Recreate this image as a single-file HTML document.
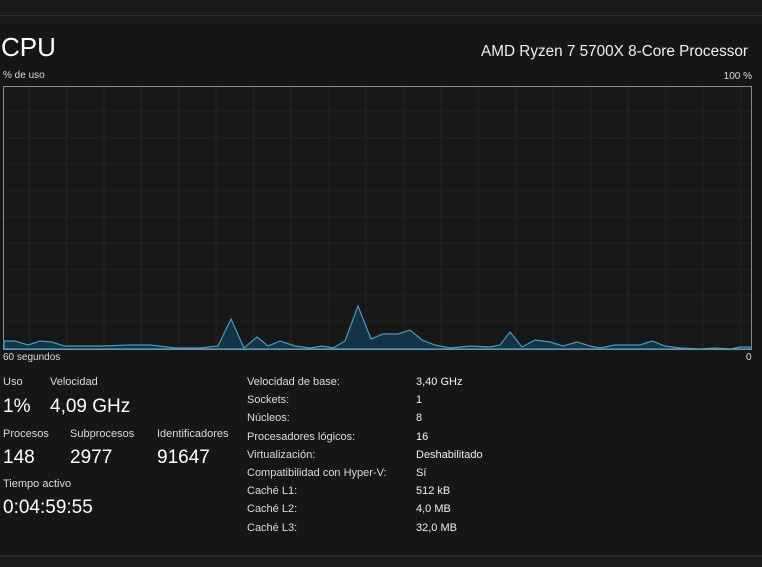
<!DOCTYPE html>
<html><head><style>
body{margin:0;width:762px;height:567px;background:#161616;overflow:hidden;font-family:"Liberation Sans",sans-serif;color:#fff;position:relative}
.a{position:absolute;white-space:nowrap}
.s{font-size:11px;color:#dcdcdc}
.b{font-size:19px;color:#fff}
.k{font-size:11px;color:#dcdcdc;line-height:18.2px}
</style></head><body>
<div class="a" style="left:0;top:0;width:762px;height:15px;background:#191919"></div>
<div class="a" style="left:0;top:15px;width:762px;height:1px;background:#2c2c2c"></div>
<div class="a" style="left:0;top:16px;width:762px;height:8px;background:#1a1a1a"></div>
<div class="a" style="left:1px;top:32px;font-size:26px;">CPU</div>
<div class="a" style="right:14px;top:43px;font-size:15.3px;color:#f0f0f0">AMD Ryzen 7 5700X 8-Core Processor</div>
<div class="a s" style="left:3px;top:70px;font-size:10px">% de uso</div>
<div class="a s" style="right:10px;top:71px;font-size:10px">100 %</div>
<svg class="a" style="left:3px;top:86px" width="749" height="264">
<defs><pattern id="g" width="37.45" height="26.3" patternUnits="userSpaceOnUse" x="0" y="0">
<rect x="25" y="0" width="2" height="26.3" fill="#1f1f1f"/><rect x="0" y="25" width="37.45" height="2" fill="#1f1f1f"/></pattern></defs>
<rect width="749" height="264" fill="#171717"/>
<rect width="749" height="264" fill="url(#g)"/>
<rect x="0.5" y="0.5" width="748" height="263" fill="none" stroke="#8a8a8a"/>
<g transform="translate(-3,-86)">
<polygon fill="#123446" stroke="#4d9ab8" stroke-width="1.2" points="4,349 4,341 15,341 28,345 40,341 52,342 64,346 100,346 130,345 150,345 175,348 200,348 218,346 231,319 244,348 257,337 268,346 280,341 295,346 310,348 322,346 333,348 345,341 358,306 371,339 383,334 398,334 410,330 422,340 435,345 450,348 470,346 490,347 500,345 510,332 522,347 535,340 550,342 563,346 577,342 590,346 600,348 615,345 640,345 652,341 665,346 680,348 700,349 715,348 730,349 740,347 750,347 750,349"/>
</g>
</svg>
<div class="a s" style="left:3px;top:352px;font-size:10px">60 segundos</div>
<div class="a s" style="left:746px;top:352px;font-size:10px">0</div>
<div class="a s" style="left:3px;top:376px">Uso</div>
<div class="a s" style="left:50px;top:376px">Velocidad</div>
<div class="a b" style="left:3px;top:396px">1%</div>
<div class="a b" style="left:50px;top:396px">4,09 GHz</div>
<div class="a s" style="left:3px;top:428px">Procesos</div>
<div class="a s" style="left:70px;top:428px">Subprocesos</div>
<div class="a s" style="left:157px;top:428px">Identificadores</div>
<div class="a b" style="left:3px;top:447px">148</div>
<div class="a b" style="left:70px;top:447px">2977</div>
<div class="a b" style="left:157px;top:447px">91647</div>
<div class="a s" style="left:3px;top:478px">Tiempo activo</div>
<div class="a b" style="left:3px;top:497px">0:04:59:55</div>
<div class="a k" style="left:247px;top:373px">Velocidad de base:<br>Sockets:<br>Núcleos:<br>Procesadores lógicos:<br>Virtualización:<br>Compatibilidad con Hyper-V:<br>Caché L1:<br>Caché L2:<br>Caché L3:</div>
<div class="a k" style="left:416px;top:373px;color:#f0f0f0">3,40 GHz<br>1<br>8<br>16<br>Deshabilitado<br>Sí<br>512 kB<br>4,0 MB<br>32,0 MB</div>
<div class="a" style="left:0;top:555px;width:762px;height:2px;background:#2a2a2a"></div>
<div class="a" style="left:0;top:557px;width:762px;height:10px;background:#1c1c1c"></div>
</body></html>
